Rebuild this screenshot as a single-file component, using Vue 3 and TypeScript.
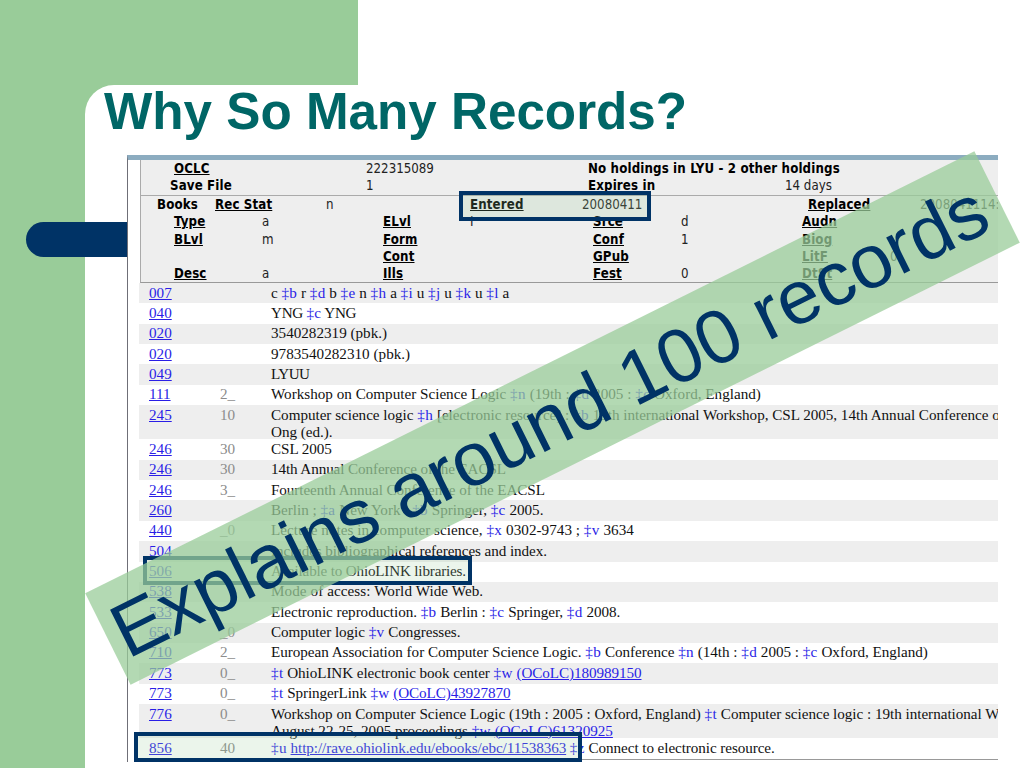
<template>
  <main class="slide">
    <div class="corner"></div>
    <div class="panel"></div>
    <div class="pill"></div>

    <h1 class="title">Why So Many Records?</h1>

    <section class="record">
      <div class="fixed-fields">
        <div class="status">
          <div v-for="(row, i) in statusRows" :key="i" class="ff-row status-row">
            <span v-for="(cell, j) in row" :key="j" :class="cellClass(cell)">{{ cell.text }}</span>
          </div>
        </div>
        <div class="elements">
          <div class="ff-row books-row">
            <span v-for="(cell, j) in booksRow" :key="j" :class="cellClass(cell)">{{ cell.text }}</span>
          </div>
          <div v-for="(row, i) in elementRows" :key="i" class="ff-row element-row">
            <span v-for="(cell, j) in row" :key="j" :class="cellClass(cell)">{{ cell.text }}</span>
          </div>
        </div>
      </div>

      <div class="fields">
        <div v-for="(field, i) in fields" :key="i" class="field" :class="{ tall: field.lines.length > 1 }">
          <a class="tag">{{ field.tag }}</a>
          <span class="ind">{{ field.ind }}</span>
          <div class="data" :style="{ letterSpacing: `${field.track ?? -0.05}px` }">
            <div v-for="(line, j) in field.lines" :key="j" class="line">
              <span v-for="(part, k) in parse(line)" :key="k" :class="part.kind">{{ part.text }}</span>
            </div>
          </div>
        </div>
      </div>
    </section>

    <div class="mark mark-entered"></div>
    <div class="mark mark-506"></div>
    <div class="mark mark-856"></div>

    <div class="banner"><span>Explains around 100 records</span></div>
  </main>
</template>

<script setup lang="ts">
interface Cell {
  text: string
  style?: 'label' | 'link'
}

interface Field {
  tag: string
  ind: string
  lines: string[]
  track?: number
}

interface Part {
  text: string
  kind: 'plain' | 'sub' | 'url'
}

const label = (text: string): Cell => ({ text, style: 'label' })
const link = (text: string): Cell => ({ text, style: 'link' })
const val = (text = ''): Cell => ({ text })

// ── Fixed fields ────────────────────────────────────────────────────────────
const statusRows: Cell[][] = [
  [link('OCLC'), val('222315089'), label('No holdings in LYU - 2 other holdings'), val()],
  [label('Save File'), val('1'), label('Expires in'), val('14 days')],
]

const booksRow: Cell[] = [
  label('Books'), link('Rec Stat'), val('n'), link('Entered'), val('20080411'), link('Replaced'), val('2008041114:'),
]

const elementRows: Cell[][] = [
  [link('Type'), val('a'), link('ELvl'), val('I'), link('Srce'), val('d'), link('Audn'), val()],
  [link('BLvl'), val('m'), link('Form'), val(), link('Conf'), val('1'), link('Biog'), val()],
  [val(), val(), link('Cont'), val(), link('GPub'), val(), link('LitF'), val('0')],
  [link('Desc'), val('a'), link('Ills'), val(), link('Fest'), val('0'), link('DtSt'), val()],
]

// ── Variable fields, [[...]] is a link ──────────────────────────────────────
const fields: Field[] = [
  { tag: '007', ind: '', lines: ['c ‡b r ‡d b ‡e n ‡h a ‡i u ‡j u ‡k u ‡l a'] },
  { tag: '040', ind: '', lines: ['YNG ‡c YNG'], track: -0.3 },
  { tag: '020', ind: '', lines: ['3540282319 (pbk.)'], track: 0 },
  { tag: '020', ind: '', lines: ['9783540282310 (pbk.)'], track: 0.02 },
  { tag: '049', ind: '', lines: ['LYUU'], track: -0.5 },
  {
    tag: '111',
    ind: '2_',
    lines: ['Workshop on Computer Science Logic ‡n (19th : ‡d 2005 : ‡c Oxford, England)'],
    track: 0.005,
  },
  {
    tag: '245',
    ind: '10',
    lines: [
      'Computer science logic ‡h [electronic resource] : ‡b 19th international Workshop, CSL 2005, 14th Annual Conference o',
      'Ong (ed.).',
    ],
    track: -0.02,
  },
  { tag: '246', ind: '30', lines: ['CSL 2005'] },
  { tag: '246', ind: '30', lines: ['14th Annual Conference of the EACSL'], track: -0.1 },
  { tag: '246', ind: '3_', lines: ['Fourteenth Annual Conference of the EACSL'], track: -0.08 },
  { tag: '260', ind: '', lines: ['Berlin ; ‡a New York : ‡b Springer, ‡c 2005.'], track: -0.02 },
  { tag: '440', ind: '_0', lines: ['Lecture notes in computer science, ‡x 0302-9743 ; ‡v 3634'], track: 0.03 },
  { tag: '504', ind: '', lines: ['Includes bibliographical references and index.'], track: -0.08 },
  { tag: '506', ind: '', lines: ['Available to OhioLINK libraries.'], track: -0.18 },
  { tag: '538', ind: '', lines: ['Mode of access: World Wide Web.'], track: 0.08 },
  { tag: '533', ind: '', lines: ['Electronic reproduction. ‡b Berlin : ‡c Springer, ‡d 2008.'] },
  { tag: '650', ind: '_0', lines: ['Computer logic ‡v Congresses.'] },
  {
    tag: '710',
    ind: '2_',
    lines: ['European Association for Computer Science Logic. ‡b Conference ‡n (14th : ‡d 2005 : ‡c Oxford, England)'],
    track: -0.03,
  },
  { tag: '773', ind: '0_', lines: ['‡t OhioLINK electronic book center ‡w [[(OCoLC)180989150]]'], track: -0.07 },
  { tag: '773', ind: '0_', lines: ['‡t SpringerLink ‡w [[(OCoLC)43927870]]'], track: -0.1 },
  {
    tag: '776',
    ind: '0_',
    lines: [
      'Workshop on Computer Science Logic (19th : 2005 : Oxford, England) ‡t Computer science logic : 19th international W',
      'August 22-25, 2005 proceedings ‡w [[(OCoLC)61320925]]',
    ],
    track: -0.025,
  },
  {
    tag: '856',
    ind: '40',
    lines: ['‡u [[http://rave.ohiolink.edu/ebooks/ebc/11538363]] ‡z Connect to electronic resource.'],
    track: -0.07,
  },
]

function cellClass(cell: Cell) {
  return ['cell', cell.style]
}

function parse(line: string): Part[] {
  return line
    .split(/(‡\w|\[\[.*?\]\])/)
    .filter(Boolean)
    .map((text): Part => {
      if (text.startsWith('‡')) return { text, kind: 'sub' }
      if (text.startsWith('[[')) return { text: text.slice(2, -2), kind: 'url' }
      return { text, kind: 'plain' }
    })
}
</script>

<style>
body {
  margin: 0;
  overflow: hidden;
}
</style>

<style scoped>
.slide {
  position: relative;
  width: 1024px;
  height: 768px;
  overflow: hidden;
  background: #fff;
  display: flow-root;
}

/* ── Slide shapes ─────────────────────────────────────────────────────────── */
.corner {
  position: absolute;
  left: 0;
  top: 0;
  width: 358px;
  height: 768px;
  background: #99cc99;
}

.panel {
  position: absolute;
  left: 85px;
  top: 85px;
  width: 960px;
  height: 700px;
  background: #fff;
  border-top-left-radius: 29px;
}

.pill {
  position: absolute;
  left: 26px;
  top: 222px;
  width: 130px;
  height: 35px;
  background: #003366;
  border-radius: 18px 0 0 18px;
}

.title {
  position: relative;
  margin: 82px 0 0 104px;
  height: 73px;
  font: bold 51.2px/60px "Liberation Sans", Arial, sans-serif;
  color: #006666;
  white-space: nowrap;
}

/* ── Catalog record ───────────────────────────────────────────────────────── */
.record {
  position: relative;
  box-sizing: border-box;
  width: 871px;
  height: 607px;
  margin-left: 127px;
  overflow: hidden;
  background: #fff;
  border-top: 5px solid #8cacc0;
  border-left: 1px solid #6f6f77;
}

.fixed-fields {
  box-sizing: border-box;
  margin-left: 12px;
  height: 123px;
  background: #eee;
  border-left: 1px solid #aaa;
  border-bottom: 1px solid #999;
  font: 13.2px/17px "DejaVu Sans Condensed", "DejaVu Sans", sans-serif;
  color: #222;
}

.status {
  box-sizing: border-box;
  height: 36px;
  border-bottom: 1px solid #aaa;
}

.elements {
  padding-top: 0.4px;
}

.ff-row {
  display: grid;
  height: 17.1px;
  white-space: nowrap;
}

.status-row {
  padding-left: 33px;
  grid-template-columns: 192px 222px 197px 200px;
}

.status-row:last-child .cell:first-child {
  margin-left: -4px;
}

.books-row {
  padding-left: 16px;
  grid-template-columns: 58px 111px 144px 112px 226px 112px 100px;
}

.element-row {
  padding-left: 33px;
  grid-template-columns: 88px 121px 87px 123px 88px 121px 88px 60px;
}

.label,
.link {
  font-weight: bold;
  letter-spacing: 0.13px;
  color: #000;
}

.link {
  text-decoration: underline;
}

.fields {
  margin-left: 11px;
  border-bottom: 1px solid #999;
  font: 15.15px/17px "Liberation Serif", "Times New Roman", serif;
  color: #111;
}

.field {
  box-sizing: border-box;
  display: grid;
  grid-template-columns: 71px 51px 1fr;
  height: 20.35px;
  padding: 0.6px 0 0 10px;
  white-space: nowrap;
}

.field.tall {
  height: 34.4px;
}

.field:nth-child(odd) {
  background: #eee;
}

.tag,
.url {
  color: #2a1ee6;
  text-decoration: underline;
}

.sub {
  color: #2a1ee6;
  letter-spacing: 0.35px;
}

.ind {
  color: #8c8c8c;
}

.line {
  white-space: pre;
}

/* ── Highlights ───────────────────────────────────────────────────────────── */
.mark {
  position: absolute;
  box-sizing: border-box;
  border: 4px solid #003366;
  background: rgba(153, 204, 153, 0.2);
}

.mark-entered {
  left: 459px;
  top: 191px;
  width: 192px;
  height: 30px;
}

.mark-506 {
  left: 143px;
  top: 556px;
  width: 329px;
  height: 29px;
}

.mark-856 {
  left: 134px;
  top: 732px;
  width: 448px;
  height: 30px;
}

.banner {
  position: absolute;
  left: 55.5px;
  top: 367px;
  width: 993px;
  height: 102px;
  display: flex;
  align-items: center;
  justify-content: center;
  background: rgba(153, 204, 153, 0.74);
  transform: rotate(-26.43deg);
  font: 76px/104px "Liberation Sans", Arial, sans-serif;
  color: #003366;
  white-space: nowrap;
}

.banner span {
  margin-right: 8px;
  padding-top: 2px;
}
</style>
